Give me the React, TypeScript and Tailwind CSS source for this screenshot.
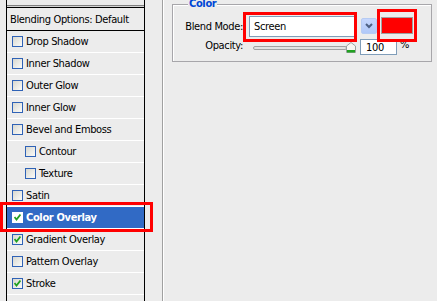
import React from "react";

const FONT = { fontFamily: '"DejaVu Sans Condensed", "DejaVu Sans", sans-serif', fontStretch: "condensed" as const };

function Check({ checked, selected }: { checked: boolean; selected?: boolean }) {
  return (
    <div
      className={
        "w-[11px] h-[11px] shrink-0 flex items-center justify-center " +
        (selected
          ? "bg-white border border-white"
          : "border border-[#2f62b6] bg-gradient-to-br from-[#d8d8d0] to-[#fbfbf9]")
      }
    >
      {checked && (
        <svg width="7" height="7" viewBox="0 0 7 7">
          <path d="M0.5 3 L2.5 5.5 L6.5 0.5" stroke="#21a121" strokeWidth="1.8" fill="none" />
        </svg>
      )}
    </div>
  );
}

const items: { label: string; checked: boolean; indent?: boolean; selected?: boolean }[] = [
  { label: "Drop Shadow", checked: false },
  { label: "Inner Shadow", checked: false },
  { label: "Outer Glow", checked: false },
  { label: "Inner Glow", checked: false },
  { label: "Bevel and Emboss", checked: false },
  { label: "Contour", checked: false, indent: true },
  { label: "Texture", checked: false, indent: true },
  { label: "Satin", checked: false },
  { label: "Color Overlay", checked: true, selected: true },
  { label: "Gradient Overlay", checked: true },
  { label: "Pattern Overlay", checked: false },
  { label: "Stroke", checked: true },
];

export default function App() {
  return (
    <div
      className="relative w-[437px] h-[301px] overflow-hidden bg-[#ececec] flex text-[11px] leading-[13px] text-black tracking-[-0.35px]"
      style={FONT}
    >
      <div className="w-[6px] shrink-0" />
      {/* left list panel */}
      <div className="w-[139px] shrink-0 flex flex-col border-l border-r border-black">
        <div className="h-[5px] shrink-0" />
        <div className="h-px shrink-0 bg-[#808080]" />
        <div className="h-px shrink-0 bg-[#d4d4d4]" />
        <div className="h-[24px] shrink-0 flex items-center pl-[3px] border-t border-b border-black">
          Blending Options: Default
        </div>
        {items.map((it) => (
          <div key={it.label} className="h-[22px] shrink-0 flex flex-col">
            <div
              className={
                "h-[21px] flex items-center gap-[3px] " +
                (it.indent ? "pl-[18px] " : "pl-[5px] ") +
                (it.selected ? "bg-[#316ac5] text-white font-bold" : "")
              }
            >
              <Check checked={it.checked} selected={it.selected} />
              <span>{it.label}</span>
            </div>
            <div className="h-px bg-white" />
          </div>
        ))}
      </div>
      <div className="w-[17px] shrink-0" />
      <div className="w-px shrink-0 bg-[#a0a0a0]" />
      <div className="w-px shrink-0 bg-white" />
      <div className="w-[8px] shrink-0" />
      {/* right content */}
      <div className="flex-1 flex flex-col pt-[4px] pr-[5px]">
        <div className="relative h-[58px] border border-[#a7a6aa] shadow-[inset_1px_1px_0_#ffffff]">
          <span className="absolute left-[15px] -top-[8px] px-[1px] font-bold text-[#0046d5] bg-[#ececec]">
            Color
          </span>
          <div className="flex flex-col pt-[11px]">
            <div className="flex items-start h-[21px]">
              <div className="w-[70px] h-[21px] flex items-center justify-end">Blend Mode:</div>
              <div className="ml-[6px] w-[106px] h-[21px] bg-white border border-[#7f9db9] flex items-center pl-[4px]">
                Screen
              </div>
              <div className="ml-[6px] mt-[2px] w-[16px] h-[16px] rounded-[2px] bg-gradient-to-b from-[#c6d7fd] to-[#b0c8f8] border border-[#b6cbf3] flex items-center justify-center">
                <svg width="8" height="6" viewBox="0 0 8 6">
                  <path d="M1 1 L4 4 L7 1" stroke="#4d6185" strokeWidth="2" fill="none" />
                </svg>
              </div>
              <div className="ml-[4px] mt-[1px] w-[32px] h-[17px] border border-[#a0a0a0] bg-[#ff0000]" />
            </div>
            <div className="flex items-start h-[18px] mt-[1px]">
              <div className="w-[70px] text-right pt-[1px]">Opacity:</div>
              <div className="ml-[10px] w-[94px] relative h-[16px]">
                <div className="absolute left-0 right-0 top-[8px] h-[4px] rounded-[2px] bg-[#e2e2e2] border border-[#a0a0a0]" />
                <svg className="absolute right-[-9px] top-[4px]" width="10" height="11" viewBox="0 0 10 11">
                  <path d="M0.5 10.5 V4 L5 0.5 L9.5 4 V10.5 Z" fill="#f6f6f2" stroke="#9aa0a0" />
                  <rect x="1" y="8" width="8" height="2.5" fill="#21a121" />
                </svg>
              </div>
              <div className="ml-[13px] mt-[1px] w-[37px] h-[16px] bg-white border border-[#7f9db9] flex items-center pl-[5px]">
                100
              </div>
              <div className="ml-[3px]">%</div>
            </div>
          </div>
        </div>
      </div>
      {/* red annotation boxes */}
      <div className="absolute left-[0px] top-[202px] w-[153px] h-[30px] border-[3px] border-[#ff0000]" />
      <div className="absolute left-[243px] top-[12px] w-[114px] h-[30px] border-[3px] border-[#ff0000]" />
      <div className="absolute left-[377px] top-[9px] w-[40px] h-[33px] border-[3px] border-[#ff0000]" />
    </div>
  );
}
